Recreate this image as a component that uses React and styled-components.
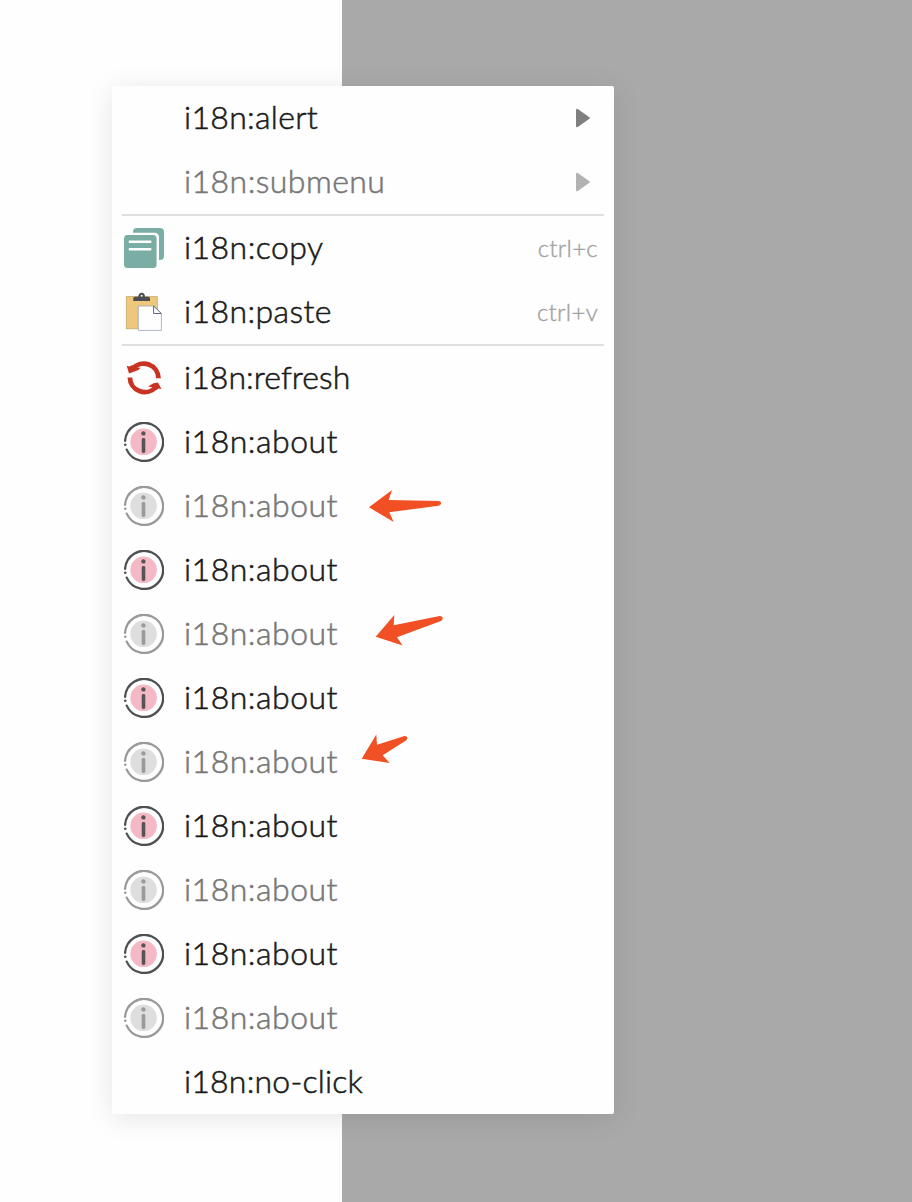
import React from "react";
import styled, { createGlobalStyle } from "styled-components";

const GlobalStyle = createGlobalStyle`
  *, *::before, *::after { box-sizing: border-box; }
  html, body { margin: 0; padding: 0; }
  body { background: #fefefe; }
`;

const Page = styled.main`
  position: relative;
  width: 912px;
  height: 1202px;
  padding: 86px 0 0 112px;
  overflow: hidden;
  background: linear-gradient(to right, #fefefe 342px, #a9a9a9 342px);
  font-family: Lato, "Liberation Sans", sans-serif;
`;

const Menu = styled.ul`
  width: 502px;
  margin: 0;
  padding: 0;
  list-style: none;
  background: #fefefe;
  border-radius: 2px;
  box-shadow: 0 4px 28px rgba(0, 0, 0, 0.1);
`;

const Item = styled.li`
  display: flex;
  align-items: center;
  height: 64px;
  padding: 0 16px 0 12px;
  color: ${(p) => (p.$disabled ? "#777" : "#1a1a1a")};
`;

const IconSlot = styled.span`
  display: flex;
  flex: none;
  width: 40px;
  height: 40px;
  margin-right: 20px;
`;

const Label = styled.span`
  flex: 1;
  font-size: 32px;
  font-weight: 300;
  line-height: 62px;
  height: 64px;
  white-space: nowrap;
  letter-spacing: ${(p) => p.$tracking}px;
  -webkit-text-stroke: 0.55px currentColor;
`;

const Shortcut = styled.span`
  height: 64px;
  font-size: 24px;
  font-weight: 300;
  line-height: 64px;
  letter-spacing: 0.3px;
  color: #a2a2a2;
  -webkit-text-stroke: 0.4px currentColor;
`;

const Caret = styled.svg`
  display: block;
  width: 16px;
  height: 20px;
  margin-right: 7px;
  fill: ${(p) => (p.$disabled ? "#b2b2b2" : "#7f7f7f")};
`;

const Separator = styled.li`
  height: 2px;
  margin: 0 10px;
  background: #e0e0e0;
`;

const Annotations = styled.svg`
  position: absolute;
  left: 360px;
  top: 480px;
  width: 90px;
  height: 290px;
  fill: #f05023;
`;

function CopyIcon() {
  return (
    <svg width="40" height="40" viewBox="0 0 40 40">
      <path
        d="M9 4.800V4a4 4 0 0 1 4-4h23a4 4 0 0 1 4 4v24a4 4 0 0 1-4 4h-1V9a4.200 4.200 0 0 0-4.200-4.200z"
        fill="#7aada4"
      />
      <rect y="7" width="32.600" height="33" rx="3.500" fill="#7aada4" />
      <path d="M4.800 13.700H27.300M4.800 21.200H27.300" stroke="#fff" strokeWidth="2.400" />
    </svg>
  );
}

function PasteIcon() {
  return (
    <svg width="40" height="40" viewBox="0 0 40 40">
      <rect x="2.300" y="4.600" width="31" height="32.200" fill="#efc77c" stroke="#c9ab70" strokeWidth="0.800" />
      <path d="M9.300 9V6.300a1.600 1.600 0 0 1 1.600-1.600h3.500a3.300 3.300 0 1 1 6.500 0h3.500A1.600 1.600 0 0 1 26 6.300V9z" fill="#4b4d50" />
      <circle cx="17.650" cy="3.700" r="1" fill="#fff" />
      <path d="M14.300 14h15.300l7.800 7.800v16.600H14.300z" fill="#fefefe" stroke="#9aa3b5" strokeWidth="0.800" />
      <path d="M29.600 14v7.500h7.700z" fill="#fefefe" stroke="#5d6880" strokeWidth="1" />
    </svg>
  );
}

function RefreshIcon() {
  return (
    <svg width="40" height="40" viewBox="0 0 40 40">
      <g fill="none" stroke="#c93322" strokeWidth="4.800">
        <path d="M8.600 10.700A14.800 14.800 0 0 1 34.500 20.200" />
        <path d="M5.900 19.400A14.800 14.800 0 0 0 31.600 29.300" />
      </g>
      <g fill="#c93322">
        <path d="M2.700 7.700L5.300 8.400L8 7.200L13 9.600L16.500 9.800L14.500 12L5 15.600z" />
        <path d="M37.500 31L33.900 24.500L29.500 25.200L24 28.600L30 29.600L32.500 32L34.500 30.500z" />
      </g>
    </svg>
  );
}

function InfoIcon({ disabled }) {
  const ring = disabled ? "#999" : "#4d4f50";
  const glyph = disabled ? "#999" : "#555";
  return (
    <svg width="40" height="40" viewBox="0 0 40 40">
      <path d="M1.100 18.900A19 19 0 1 1 2.700 27.600" fill="none" stroke={ring} strokeWidth="2.300" strokeLinecap="round" />
      <circle cx="1.300" cy="22.700" r="1.300" fill={ring} />
      <circle cx="19.600" cy="19.800" r="13.300" fill={disabled ? "#dedede" : "#f5b8c5"} />
      <circle cx="19.400" cy="11.400" r="2.200" fill={glyph} />
      <rect x="17.700" y="16" width="3.600" height="15" rx="1.400" fill={glyph} />
    </svg>
  );
}

const about = { label: "i18n:about", Icon: InfoIcon, tracking: 0.5 };
const aboutDisabled = { ...about, disabled: true };

const entries = [
  { label: "i18n:alert", submenu: true, tracking: 0.3 },
  { label: "i18n:submenu", submenu: true, disabled: true, tracking: 0.45 },
  { separator: true },
  { label: "i18n:copy", Icon: CopyIcon, shortcut: "ctrl+c", tracking: 0.45 },
  { label: "i18n:paste", Icon: PasteIcon, shortcut: "ctrl+v", tracking: 0.4 },
  { separator: true },
  { label: "i18n:refresh", Icon: RefreshIcon, tracking: 0.05 },
  about,
  aboutDisabled,
  about,
  aboutDisabled,
  about,
  aboutDisabled,
  about,
  aboutDisabled,
  about,
  aboutDisabled,
  { label: "i18n:no-click", tracking: 0.2 },
];

function MenuItem({ label, Icon, shortcut, submenu, disabled, tracking }) {
  return (
    <Item $disabled={disabled} aria-disabled={disabled}>
      <IconSlot>{Icon && <Icon disabled={disabled} />}</IconSlot>
      <Label $tracking={tracking}>{label}</Label>
      {shortcut && <Shortcut>{shortcut}</Shortcut>}
      {submenu && (
        <Caret $disabled={disabled} viewBox="0 0 16 20">
          <path d="M1 2.200Q1 0 2.800 1L14.400 9.200Q15.500 10 14.400 10.800L2.800 19Q1 20 1 17.800z" />
        </Caret>
      )}
    </Item>
  );
}

export default function App() {
  return (
    <>
      <GlobalStyle />
      <Page>
        <Menu>
          {entries.map((entry, i) =>
            entry.separator ? <Separator key={i} /> : <MenuItem key={i} {...entry} />
          )}
        </Menu>
        <Annotations viewBox="0 0 90 290">
          <path d="M9 27.300L32 10L28.700 20L79 21Q81.500 21.500 81 23.800Q80.500 25.500 78.500 25.700L29.300 32.300L33.700 42z" />
          <path d="M15.700 156.700L34.300 135L33.700 145.300L79.700 136Q82 135.900 82.700 137.800Q83 140 81 141L37 157.300L42.700 165.500z" />
          <path d="M1.700 278.700L16.300 254.500L17 264.700L44.500 256Q46.800 255.800 47.300 257.500Q47.500 259.500 46 260.500L22.700 275.300L29.700 283z" />
        </Annotations>
      </Page>
    </>
  );
}
